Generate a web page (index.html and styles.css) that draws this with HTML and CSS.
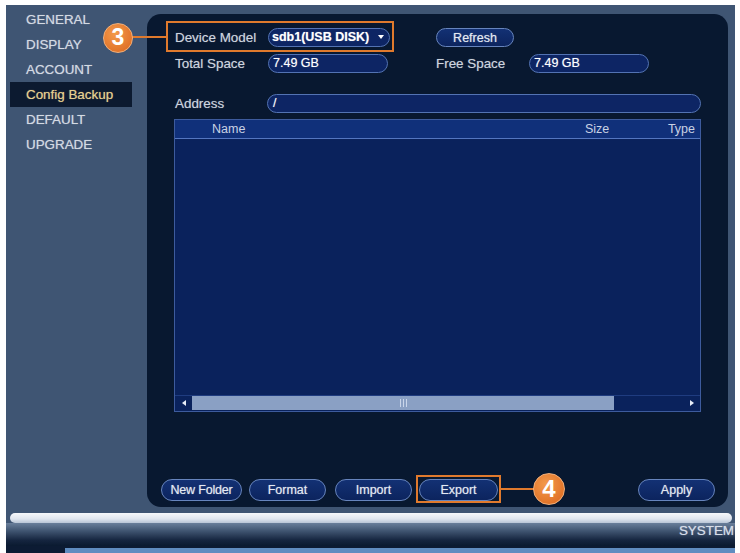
FILE: index.html
```html
<!DOCTYPE html>
<html lang="en">
<head>
<meta charset="utf-8">
<title>Config Backup</title>
<link rel="stylesheet" href="styles.css">
</head>
<body>
<div class="screen">
  <div class="workspace">
    <nav class="menu">
      <div class="menu-item">GENERAL</div>
      <div class="menu-item">DISPLAY</div>
      <div class="menu-item">ACCOUNT</div>
      <div class="menu-item active">Config Backup</div>
      <div class="menu-item">DEFAULT</div>
      <div class="menu-item">UPGRADE</div>
    </nav>

    <section class="panel">
      <div class="form">
        <span class="label">Device Model</span>
        <div class="field select">sdb1(USB DISK)<span class="caret"></span></div>
        <span></span>
        <button class="btn refresh">Refresh</button>
        <span></span>

        <span class="label">Total Space</span>
        <div class="field space">7.49 GB</div>
        <span></span>
        <span class="label">Free Space</span>
        <div class="field space">7.49 GB</div>
      </div>

      <div class="address-row">
        <span class="label address-label">Address</span>
        <div class="field address">/</div>
      </div>

      <div class="filelist">
        <div class="filelist-head">
          <span class="col-name">Name</span>
          <span class="col-size">Size</span>
          <span class="col-type">Type</span>
        </div>
        <div class="filelist-body"></div>
        <div class="hscroll">
          <span class="arrow left"></span>
          <div class="thumb"><span class="grip"></span></div>
          <span class="track"></span>
          <span class="arrow right"></span>
        </div>
      </div>

      <div class="actions">
        <button class="btn new-folder">New Folder</button>
        <button class="btn format">Format</button>
        <button class="btn import">Import</button>
        <button class="btn export">Export</button>
        <button class="btn apply">Apply</button>
      </div>
    </section>
  </div>

  <div class="statusbar">
    <div class="gloss"></div>
    <div class="caption">SYSTEM</div>
  </div>
  <div class="taskbar"><div class="taskfill"></div></div>

  <!-- step callouts -->
  <div class="callout-box box-3"></div>
  <div class="callout-line line-3"></div>
  <div class="step step-3">3</div>

  <div class="callout-box box-4"></div>
  <div class="callout-line line-4"></div>
  <div class="step step-4">4</div>
</div>
</body>
</html>
```

FILE: styles.css
```css
body {
  margin: 0;
  background: #ffffff;
  font-family: "Liberation Sans", Arial, sans-serif;
}

.screen {
  position: relative;
  margin: 5px 0 0 6px;
  width: 729px;
  height: 548px;
  background: #3f5573;
  display: flex;
  flex-direction: column;
  overflow: hidden;
}

.workspace {
  display: flex;
  height: 503px;
  flex: none;
}

/* left menu */
.menu {
  width: 141px;
  flex: none;
  padding-top: 2px;
}

.menu-item {
  box-sizing: border-box;
  width: 122px;
  height: 25px;
  margin-left: 4px;
  padding-left: 16px;
  line-height: 25px;
  font-size: 13.4px;
  color: #d4dae3;
  text-shadow: 0 0 1px rgba(212, 218, 227, 0.6);
  white-space: nowrap;
}

.menu-item.active {
  background: #0c1a30;
  color: #e8d08f;
  text-shadow: 0 0 1px rgba(232, 208, 143, 0.6);
}

/* main panel */
.panel {
  box-sizing: border-box;
  margin-top: 9px;
  width: 581px;
  height: 493px;
  background: #081830;
  border-radius: 14px;
  padding-top: 14px;
  display: flex;
  flex-direction: column;
}

.label {
  font-size: 13.4px;
  color: #cdd4df;
  line-height: 19px;
  white-space: nowrap;
  text-shadow: 0 0 1px rgba(205, 212, 223, 0.5);
}

.form {
  margin-left: 28px;
  display: grid;
  grid-template-columns: 93px 122px 46px 93px 120px;
  grid-auto-rows: 19px;
  row-gap: 7px;
  align-items: center;
}

.field {
  box-sizing: border-box;
  height: 19px;
  border: 1.5px solid #5373b3;
  border-radius: 10px;
  background: #0d2564;
  color: #ffffff;
  font-size: 12.5px;
  line-height: 16px;
  padding-left: 4px;
  white-space: nowrap;
  text-shadow: 0 0 1px rgba(255, 255, 255, 0.5);
}

.select {
  width: 122px;
  font-weight: bold;
  padding-left: 3px;
  position: relative;
}

.caret {
  position: absolute;
  right: 5px;
  top: 6px;
  width: 0;
  height: 0;
  border-left: 3px solid transparent;
  border-right: 3px solid transparent;
  border-top: 4px solid #ffffff;
}

.space {
  width: 120px;
}

.address-row {
  margin-top: 21px;
  margin-left: 28px;
  display: flex;
  align-items: center;
}

.address-label {
  width: 92px;
}

.field.address {
  width: 434px;
  padding-left: 5px;
}

/* file list */
.filelist {
  box-sizing: border-box;
  margin-top: 6px;
  margin-left: 27px;
  width: 527px;
  height: 293px;
  border: 1px solid #3d5b9d;
  background: #0a225c;
  display: flex;
  flex-direction: column;
}

.filelist-head {
  height: 18px;
  flex: none;
  background: #10307a;
  border-bottom: 1px solid #5476c0;
  position: relative;
  font-size: 12.5px;
  line-height: 18px;
  color: #c9d2e3;
}

.filelist-head span {
  position: absolute;
  top: 0;
}

.col-name { left: 37px; }
.col-size { left: 410px; }
.col-type { right: 5px; }

.filelist-body {
  flex: 1;
}

.hscroll {
  height: 14px;
  flex: none;
  margin: 0 0 1px 0;
  display: flex;
  align-items: stretch;
  border-top: 1px solid #1f3c80;
}

.arrow {
  width: 17px;
  flex: none;
  display: flex;
  align-items: center;
  justify-content: center;
}

.arrow.left::before {
  content: "";
  border-top: 3px solid transparent;
  border-bottom: 3px solid transparent;
  border-right: 4px solid #e8eef8;
}

.arrow.right::before {
  content: "";
  border-top: 3px solid transparent;
  border-bottom: 3px solid transparent;
  border-left: 4px solid #e8eef8;
}

.thumb {
  width: 422px;
  flex: none;
  background: #8aa0c4;
  display: flex;
  align-items: center;
  justify-content: center;
}

.grip {
  width: 5px;
  height: 8px;
  border-left: 1px solid #c9d5ea;
  border-right: 1px solid #c9d5ea;
  position: relative;
}

.grip::after {
  content: "";
  position: absolute;
  left: 2px;
  top: 0;
  width: 1px;
  height: 8px;
  background: #c9d5ea;
}

.track {
  flex: 1;
}

/* buttons */
.actions {
  margin-top: 67px;
  margin-left: 14px;
  margin-right: 13px;
  display: flex;
  align-items: center;
}

.btn {
  box-sizing: border-box;
  height: 22px;
  padding: 0;
  border: 1.5px solid #6684bd;
  border-radius: 11px;
  background: linear-gradient(#133174, #0c245e);
  color: #e4e9f2;
  font-family: "Liberation Sans", Arial, sans-serif;
  font-size: 12.5px;
  line-height: 19px;
  text-align: center;
  white-space: nowrap;
  text-shadow: 0 0 1px rgba(228, 233, 242, 0.6);
}

.refresh {
  width: 78px;
  height: 19px;
  line-height: 16px;
  border-radius: 10px;
}

.new-folder { width: 81px; letter-spacing: -0.2px; }
.format { width: 77px; margin-left: 7px; }
.import { width: 77px; margin-left: 9px; }
.export { width: 79px; margin-left: 7px; }
.apply { width: 77px; margin-left: auto; }

/* bottom status bar */
.statusbar {
  height: 38px;
  flex: none;
  padding-top: 5px;
  box-sizing: border-box;
  display: flex;
  flex-direction: column;
}

.gloss {
  height: 10px;
  margin: 0 3px 0 4px;
  border-radius: 5px;
  background: linear-gradient(#f6f8fb, #dfe5ee 60%, #b9c5d6);
  flex: none;
}

.caption {
  flex: 1;
  background: linear-gradient(#6a7f9b, #3f5470 35%, #15253f 75%, #0a1a30);
  text-align: right;
  font-size: 13.4px;
  line-height: 16px;
  color: #d7dee9;
  padding-right: 1px;
  text-shadow: 0 0 1px rgba(215, 222, 233, 0.7);
}

.taskbar {
  height: 7px;
  flex: none;
  background: #0c1b33;
  padding-top: 2px;
  box-sizing: border-box;
}

.taskfill {
  height: 5px;
  margin-left: 59px;
  background: #5f8cc0;
}

/* step callouts laid over the screen */
.callout-box {
  position: absolute;
  box-sizing: border-box;
  border: 2px solid #e07a2d;
}

.box-3 { left: 160px; top: 16px; width: 228px; height: 31px; }
.box-4 { left: 410px; top: 470px; width: 85px; height: 28px; }

.callout-line {
  position: absolute;
  height: 2px;
  background: #e07a2d;
}

.line-3 { left: 126px; top: 31px; width: 34px; }
.line-4 { left: 495px; top: 483px; width: 34px; }

.step {
  position: absolute;
  box-sizing: border-box;
  border-radius: 50%;
  background: radial-gradient(circle at 40% 35%, #f39a4c, #e2752a 70%, #d3661f);
  border: 1.5px solid #f2b07a;
  color: #ffffff;
  font-weight: bold;
  text-align: center;
}

.step-3 {
  left: 97px;
  top: 18px;
  width: 30px;
  height: 30px;
  font-size: 23px;
  line-height: 27px;
}

.step-4 {
  left: 527px;
  top: 468px;
  width: 32px;
  height: 32px;
  font-size: 24px;
  line-height: 29px;
}
```
